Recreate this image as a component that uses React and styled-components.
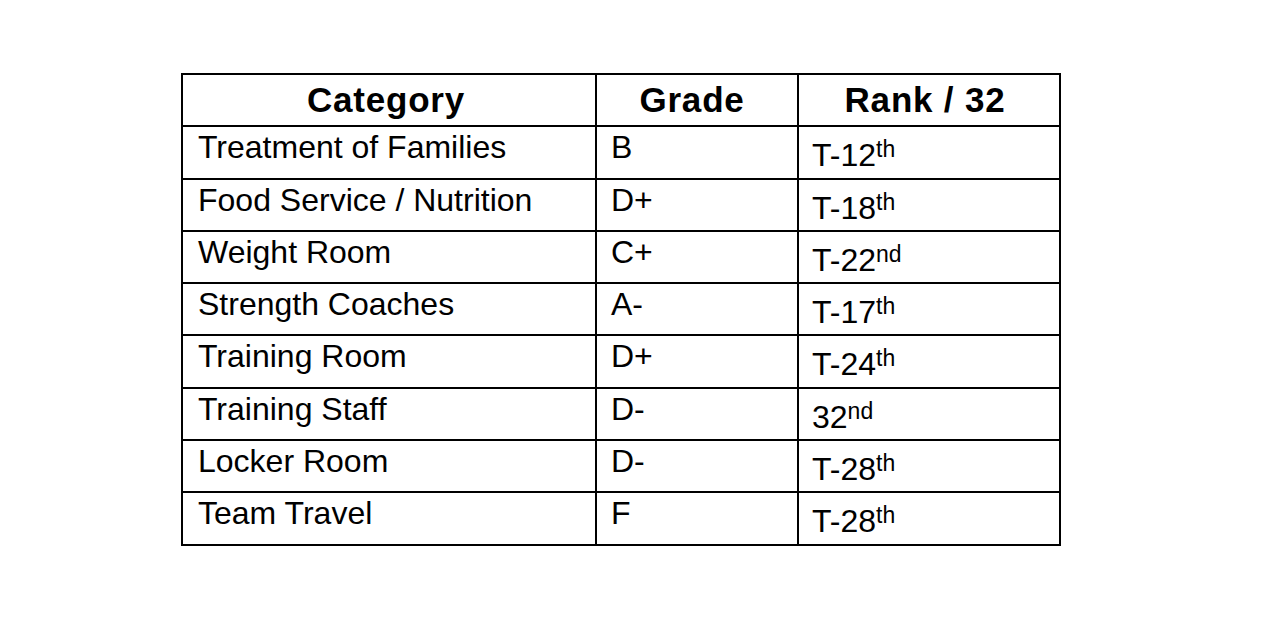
import React from "react";
import styled, { createGlobalStyle } from "styled-components";

const GlobalStyle = createGlobalStyle`
  html, body {
    margin: 0;
    padding: 0;
    background: #ffffff;
  }
  body {
    font-family: "Liberation Sans", Arial, sans-serif;
    color: #000000;
  }
`;

const rows = [
  { category: "Treatment of Families", grade: "B", rank: "T-12", suffix: "th" },
  { category: "Food Service / Nutrition", grade: "D+", rank: "T-18", suffix: "th" },
  { category: "Weight Room", grade: "C+", rank: "T-22", suffix: "nd" },
  { category: "Strength Coaches", grade: "A-", rank: "T-17", suffix: "th" },
  { category: "Training Room", grade: "D+", rank: "T-24", suffix: "th" },
  { category: "Training Staff", grade: "D-", rank: "32", suffix: "nd" },
  { category: "Locker Room", grade: "D-", rank: "T-28", suffix: "th" },
  { category: "Team Travel", grade: "F", rank: "T-28", suffix: "th" },
];

const Page = styled.div`
  width: 1276px;
  height: 620px;
  padding: 73px 0 0 181px;
  box-sizing: border-box;
  background: #ffffff;
`;

const Grid = styled.div`
  display: grid;
  grid-template-columns: 412px 200px 260px;
  grid-template-rows: repeat(9, 50.3px);
  gap: 2px;
  padding: 2px;
  width: 880px;
  box-sizing: border-box;
  background: #000000;
`;

const HeadCell = styled.div`
  background: #ffffff;
  text-align: center;
  font-size: 35px;
  font-weight: 700;
  letter-spacing: 0.8px;
  padding-top: 5px;
  padding-right: ${(p) => (p.$nudge ? p.$nudge : 0)}px;
  line-height: normal;
  white-space: nowrap;
`;

const Cell = styled.div`
  background: #ffffff;
  font-size: 32px;
  line-height: normal;
  padding: ${(p) => (p.$low ? "10px" : "2px")} 0 0 ${(p) => p.$pad}px;
  white-space: nowrap;
`;

const Sup = styled.span`
  font-size: 23px;
  vertical-align: 9px;
  line-height: 0;
`;

export default function App() {
  return (
    <>
      <GlobalStyle />
      <Page>
        <Grid>
          <HeadCell $nudge={6}>Category</HeadCell>
          <HeadCell $nudge={10}>Grade</HeadCell>
          <HeadCell $nudge={8}>Rank / 32</HeadCell>
          {rows.map((r, i) => (
            <React.Fragment key={i}>
              <Cell $pad={15}>{r.category}</Cell>
              <Cell $pad={14}>{r.grade}</Cell>
              <Cell $pad={13} $low>
                {r.rank}
                <Sup>{r.suffix}</Sup>
              </Cell>
            </React.Fragment>
          ))}
        </Grid>
      </Page>
    </>
  );
}
